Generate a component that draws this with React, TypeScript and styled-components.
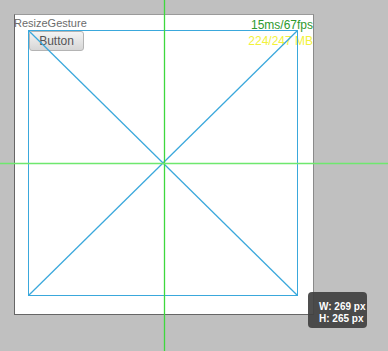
import React from "react";
import styled, { createGlobalStyle } from "styled-components";

const Global = createGlobalStyle`
  html, body { margin: 0; padding: 0; }
  body {
    background: #c0c0c0;
    width: 388px;
    height: 351px;
    overflow: hidden;
    font-family: "Liberation Sans", Arial, sans-serif;
  }
`;

const Page = styled.div`
  position: relative;
  width: 388px;
  height: 351px;
  padding: 14px;
  box-sizing: border-box;
`;

const Stage = styled.div`
  position: relative;
  width: 300px;
  height: 301px;
  box-sizing: border-box;
  background: #ffffff;
  border: 1px solid #666666;
  border-top-color: #9a9a9a;
  border-right-color: #8a8a8a;
`;

const Header = styled.div`
  display: flex;
  justify-content: space-between;
  align-items: flex-start;
  padding-top: 2px;
`;

const LeftCol = styled.div`
  display: flex;
  flex-direction: column;
  align-items: flex-start;
`;

const Title = styled.div`
  font-size: 11px;
  line-height: 13px;
  color: #6b6b6b;
  margin-left: -1px;
`;

const Button = styled.button`
  margin: 1px 0 0 14px;
  width: 55px;
  height: 20px;
  box-sizing: border-box;
  padding: 0;
  border: 1px solid #b4b4b4;
  border-radius: 3px;
  background: linear-gradient(#f4f4f4, #d6d6d6);
  color: #555555;
  font-family: "Liberation Sans", Arial, sans-serif;
  font-size: 12px;
  line-height: 18px;
`;

const Stats = styled.div`
  display: flex;
  flex-direction: column;
  align-items: flex-end;
  font-size: 12px;
  line-height: 16px;
`;

const Stat = styled.div<{ $color: string }>`
  color: ${(p) => p.$color};
`;

const Canvas = styled.svg`
  position: absolute;
  left: 0;
  top: 0;
  width: 298px;
  height: 299px;
  pointer-events: none;
`;

const Guides = styled.svg`
  position: absolute;
  left: 0;
  top: 0;
  width: 388px;
  height: 351px;
  pointer-events: none;
`;

const SizeTip = styled.div`
  position: absolute;
  left: 308px;
  top: 292px;
  width: 59px;
  height: 36px;
  box-sizing: border-box;
  padding: 9px 0 0 11px;
  border-radius: 4px;
  background: rgba(64, 64, 64, 0.92);
  color: #ffffff;
  font-size: 10px;
  font-weight: bold;
  line-height: 12px;
  white-space: nowrap;
`;

export default function App() {
  const rx = 13.5;
  const ry = 15.5;
  const rw = 269;
  const rh = 265;
  return (
    <>
      <Global />
      <Page>
        <Stage>
          <Header>
            <LeftCol>
              <Title>ResizeGesture</Title>
              <Button>Button</Button>
            </LeftCol>
            <Stats>
              <Stat $color="#2e9a2e">15ms/67fps</Stat>
              <Stat $color="#f2f23a">224/247 MB</Stat>
            </Stats>
          </Header>
          <Canvas viewBox="0 0 298 299">
            <g stroke="#3aa8dc" fill="none">
              <rect x={rx} y={ry} width={rw} height={rh} strokeWidth="1" />
              <line x1={rx} y1={ry} x2={rx + rw} y2={ry + rh} strokeWidth="1.25" />
              <line x1={rx + rw} y1={ry} x2={rx} y2={ry + rh} strokeWidth="1.25" />
            </g>
          </Canvas>
        </Stage>
        <Guides viewBox="0 0 388 351">
          <line x1="164.5" y1="0" x2="164.5" y2="351" stroke="#3ed83e" strokeWidth="1.3" />
          <line x1="0" y1="163.5" x2="388" y2="163.5" stroke="#6ee86e" strokeWidth="1.6" />
        </Guides>
        <SizeTip>
          <div>W: 269 px</div>
          <div>H: 265 px</div>
        </SizeTip>
      </Page>
    </>
  );
}
